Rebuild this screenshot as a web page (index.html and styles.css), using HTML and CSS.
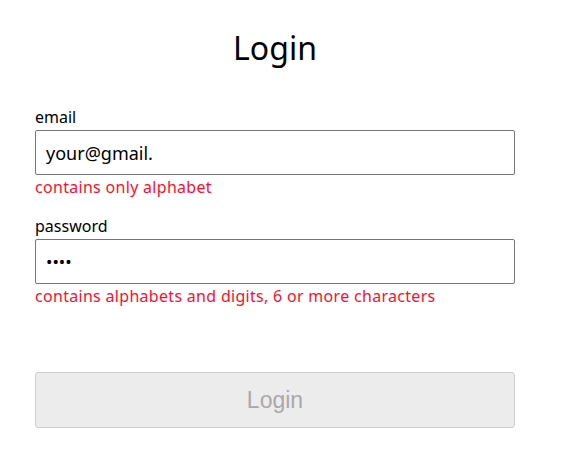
FILE: index.html
```html
<!DOCTYPE html>
<html>
<head>
<meta charset="utf-8">
<link rel="stylesheet" href="styles.css">
</head>
<body>
<div class="page">
  <h1 class="title">Login</h1>
  <form class="form">
    <div class="field">
      <label class="label" for="email">email</label>
      <input class="input" id="email" type="text" value="your@gmail.">
      <div class="error">contains only alphabet</div>
    </div>
    <div class="field">
      <label class="label" for="password">password</label>
      <input class="input input-pass" id="password" type="password" value="abcd">
      <div class="error">contains alphabets and digits, 6 or more characters</div>
    </div>
    <button class="button" type="button" disabled>Login</button>
  </form>
</div>
</body>
</html>
```

FILE: styles.css
```css
html, body {
  margin: 0;
  padding: 0;
  background: #fff;
}
body {
  font-family: "Noto Sans", "DejaVu Sans", sans-serif;
  color: #000;
}
.page {
  width: 480px;
  padding: 0 0 0 35px;
  display: flex;
  flex-direction: column;
}
.title {
  margin: 0;
  padding-top: 24px;
  height: 80px;
  box-sizing: border-box;
  font-weight: 400;
  font-size: 32px;
  line-height: 48px;
  text-align: center;
}
.form {
  display: flex;
  flex-direction: column;
  padding-top: 24px;
}
.field {
  display: flex;
  flex-direction: column;
  margin-bottom: 14px;
}
.label {
  font-size: 16px;
  line-height: 26px;
}
.input {
  box-sizing: border-box;
  height: 45px;
  width: 480px;
  margin: 0;
  padding: 0 10px;
  border: 1px solid #767676;
  border-radius: 2px;
  font-family: "Noto Sans", "DejaVu Sans", sans-serif;
  font-size: 18px;
  color: #000;
  outline: none;
}
.input-pass {
  font-size: 17px;
}
.error {
  font-size: 16px;
  line-height: 24px;
  letter-spacing: 0.3px;
  color: #ff0d2d;
}
.button {
  margin-top: 50px;
  box-sizing: border-box;
  width: 480px;
  height: 56px;
  background: #ececec;
  border: 1px solid #cfcfcf;
  border-radius: 3px;
  color: #a9a9a9;
  font-family: "Liberation Sans", Arial, sans-serif;
  font-size: 23px;
  padding: 0;
}
```
